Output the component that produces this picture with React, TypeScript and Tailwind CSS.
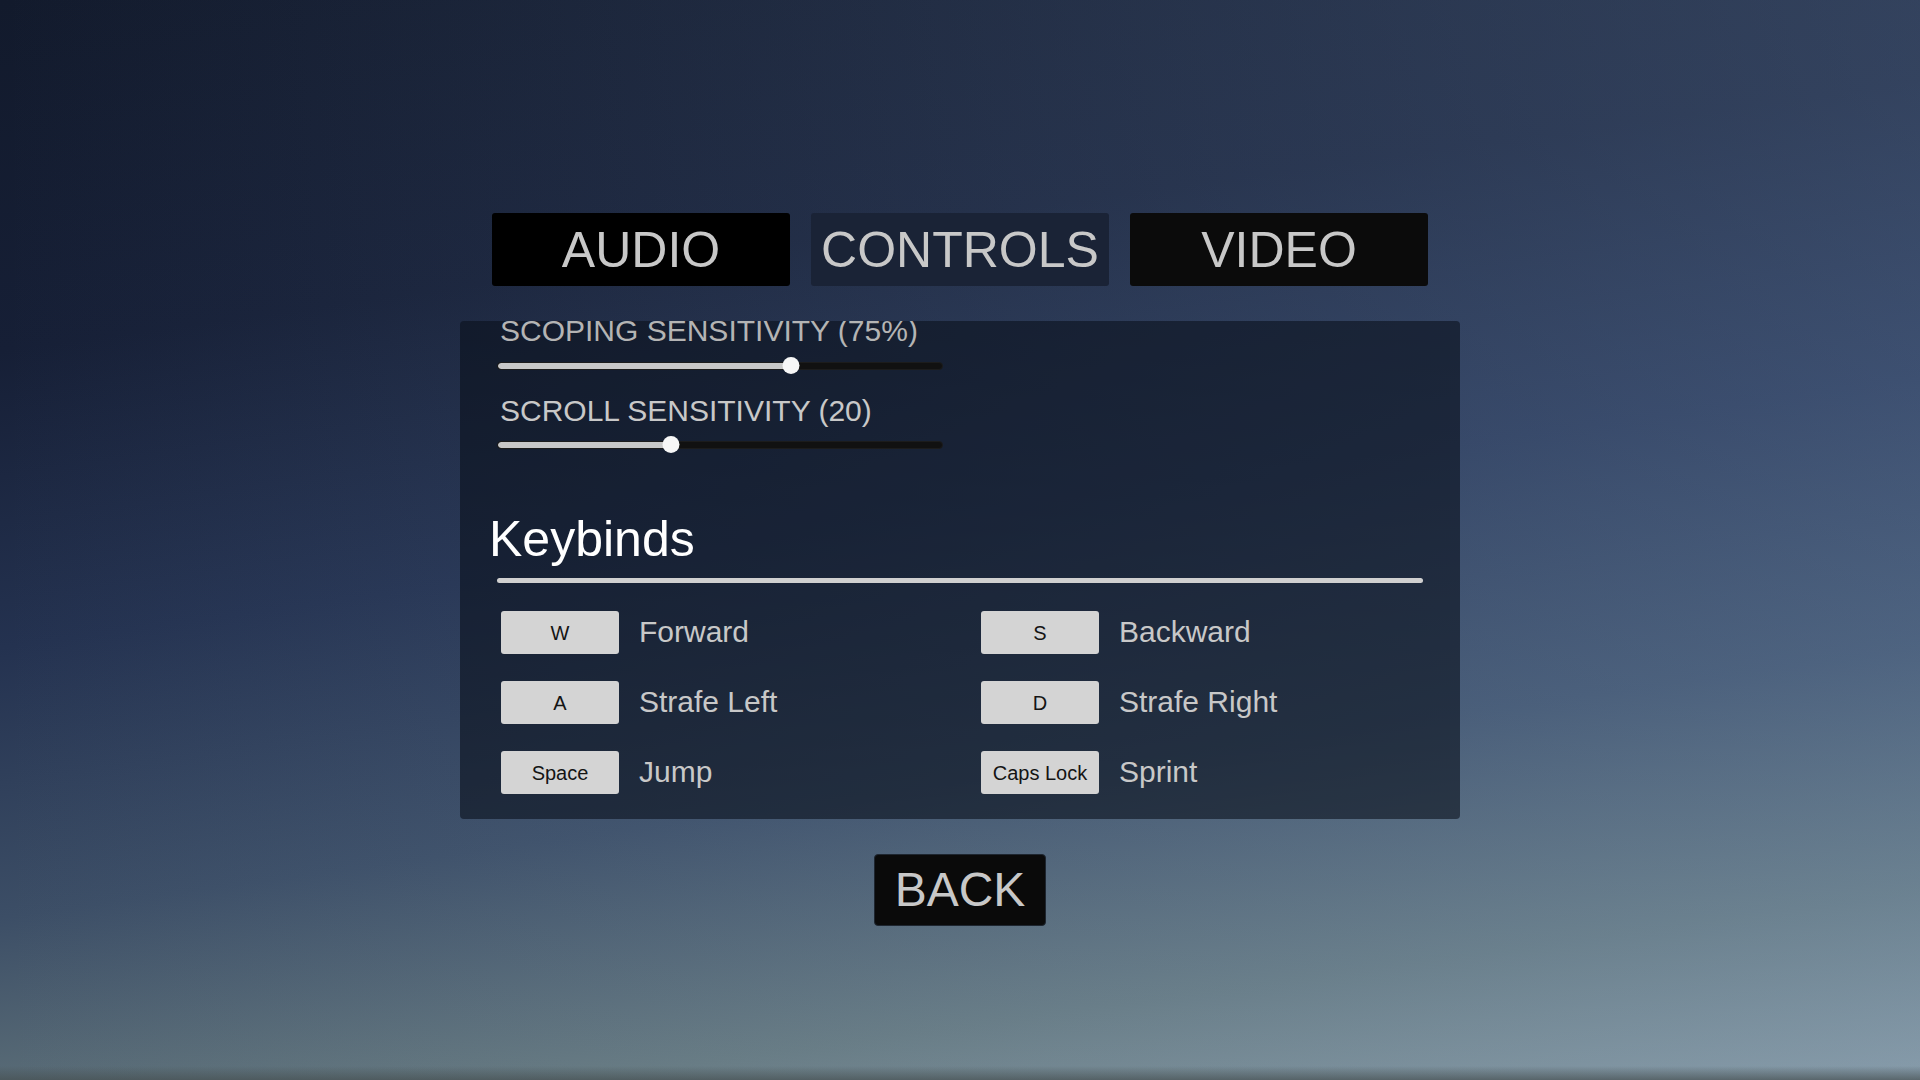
import { useState } from "react";

const font = { fontFamily: '"Liberation Sans", Arial, sans-serif' };

function Slider({ value }: { value: number }) {
  return (
    <div className="relative flex h-[17px] w-[446px] items-center">
      <div className="h-[8px] w-full overflow-hidden rounded-full border border-[#1c1c1c] bg-[#111111]">
        <div className="h-full rounded-full bg-[#c8c8c8]" style={{ width: `${value}%` }} />
      </div>
      <div
        className="absolute top-0 h-[17px] w-[17px] -translate-x-1/2 rounded-full bg-[#f7f7f7]"
        style={{ left: `${value}%` }}
      />
    </div>
  );
}

const binds = [
  ["W", "Forward"],
  ["S", "Backward"],
  ["A", "Strafe Left"],
  ["D", "Strafe Right"],
  ["Space", "Jump"],
  ["Caps Lock", "Sprint"],
];

export default function App() {
  const [tab, setTab] = useState("CONTROLS");

  return (
    <div
      className="flex h-screen w-full flex-col items-center overflow-hidden bg-[linear-gradient(to_top,rgba(70,80,82,0.7)_0px,rgba(70,80,82,0)_14px),linear-gradient(to_right,rgba(110,140,185,0)_0%,rgba(120,150,190,0.3)_100%),linear-gradient(172deg,#121a2c_0%,#161f36_26%,#243250_48%,#3c4e66_68%,#66797e_86%,#8d9ea2_100%)] pt-[213px]"
      style={font}
    >
      <div className="flex gap-[21px]">
        {["AUDIO", "CONTROLS", "VIDEO"].map((t) => (
          <button
            key={t}
            onClick={() => setTab(t)}
            className={
              "flex h-[73px] w-[298px] items-center justify-center rounded-[3px] text-[50px] leading-none text-[#c8c8c8] " +
              (t === tab ? "bg-[#1a2336]" : t === "AUDIO" ? "bg-black" : "bg-[#0b0b0b]")
            }
          >
            {t}
          </button>
        ))}
      </div>

      <div className="mt-[35px] h-[498px] w-[1000px] overflow-hidden rounded-[4px] bg-[rgba(10,16,28,0.6)] px-[37px]">
        <div className="-mt-[8px]">
          <div className="h-[36px] pl-[3px] text-[30px] leading-[36px] text-[#b4b4b4]">SCOPING SENSITIVITY (75%)</div>
          <div className="mt-[8px]">
            <Slider value={66} />
          </div>
        </div>
        <div className="mt-[19px]">
          <div className="h-[36px] pl-[3px] text-[30px] leading-[36px] text-[#c8c8c8]">SCROLL SENSITIVITY (20)</div>
          <div className="mt-[7px]">
            <Slider value={39} />
          </div>
        </div>

        <h2 className="-ml-[8px] mt-[56px] h-[60px] text-[50px] leading-[60px] text-white">Keybinds</h2>
        <div className="mt-[9px] h-[5px] rounded-full bg-[#d0d0d0]" />

        <div className="mt-[28px] grid grid-cols-[480px_1fr] gap-y-[27px] pl-[4px]">
          {binds.map(([key, action]) => (
            <div key={action} className="flex items-center gap-[20px]">
              <div className="flex h-[43px] w-[118px] items-center justify-center rounded-[3px] bg-[#d4d4d4] text-[20px] text-[#141414]">
                {key}
              </div>
              <span className="-mt-[2px] text-[30px] leading-[36px] text-[#c8c8c8]">{action}</span>
            </div>
          ))}
        </div>
      </div>

      <button className="mt-[35px] flex h-[72px] w-[172px] items-center justify-center rounded-[4px] border border-[#1e2630] bg-[#0a0a0a] text-[48px] leading-none text-[#c8c8c8]">
        BACK
      </button>
    </div>
  );
}
